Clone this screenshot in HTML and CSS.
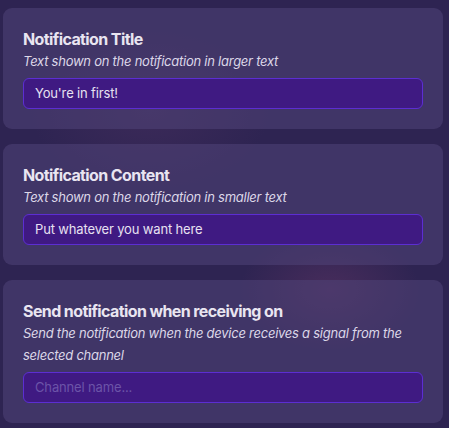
FILE: index.html
```html
<!DOCTYPE html>
<html>
<head>
<meta charset="utf-8">
<link rel="stylesheet" href="styles.css">
</head>
<body>
<div class="panel">
  <section class="card">
    <div class="title">Notification Title</div>
    <div class="desc">Text shown on the notification in larger text</div>
    <div class="field">You're in first!</div>
  </section>
  <section class="card">
    <div class="title">Notification Content</div>
    <div class="desc">Text shown on the notification in smaller text</div>
    <div class="field">Put whatever you want here</div>
  </section>
  <section class="card">
    <div class="title">Send notification when receiving on</div>
    <div class="desc">Send the notification when the device receives a signal from the selected channel</div>
    <div class="field placeholder">Channel name...</div>
  </section>
</div>
</body>
</html>
```

FILE: styles.css
```css
html, body {
  margin: 0;
  padding: 0;
}
body {
  width: 449px;
  height: 428px;
  overflow: hidden;
  background:
    radial-gradient(ellipse 90px 60px at 330px 290px, rgba(120, 60, 110, 0.35), transparent),
    radial-gradient(ellipse 120px 80px at 150px 110px, rgba(100, 60, 110, 0.25), transparent),
    #2e2452;
  font-family: Inter, "Noto Sans", sans-serif;
}
.panel {
  display: flex;
  flex-direction: column;
  gap: 15px;
  padding: 8px 6px 0 3px;
}
.card {
  background: rgba(80, 68, 120, 0.55);
  border-radius: 9px;
  padding: 20px 20px 20px 20px;
}
.title {
  color: #e9e5f1;
  font-size: 16px;
  font-weight: 700;
  line-height: 22px;
  letter-spacing: -0.6px;
}
.desc {
  color: #dcd7e8;
  font-size: 13px;
  font-style: italic;
  line-height: 22px;
  letter-spacing: -0.25px;
}
.field {
  margin-top: 6px;
  height: 31px;
  box-sizing: border-box;
  border: 1px solid #5c2ed2;
  border-radius: 6px;
  background: #3f1a82;
  color: #e7e1f1;
  font-size: 13px;
  line-height: 29px;
  padding-left: 11px;
  letter-spacing: -0.15px;
}
.placeholder {
  color: #6c54a8;
}
```
